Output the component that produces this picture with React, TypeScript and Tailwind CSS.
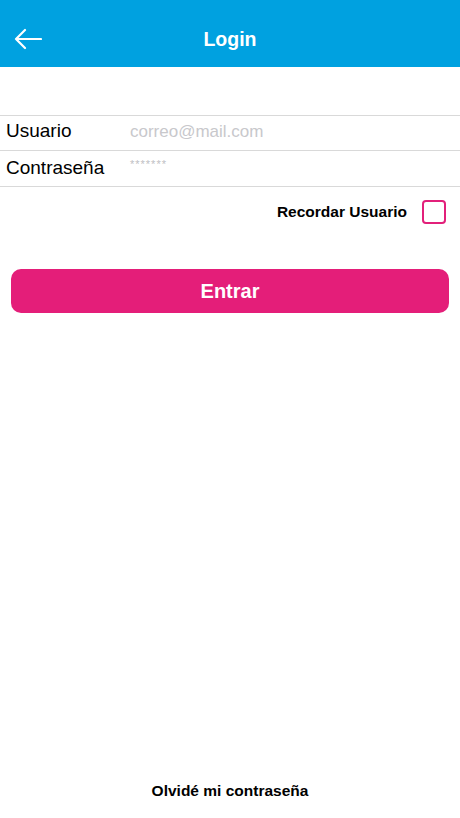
import React from "react";

export default function App() {
  return (
    <div
      className="w-[460px] h-[818px] bg-white flex flex-col"
      style={{ fontFamily: '"Liberation Sans", Arial, sans-serif' }}
    >
      <div className="h-[67px] bg-[#00a1e0] flex items-center relative shrink-0">
        <svg className="absolute left-[14px] top-[28px]" width="28" height="22" viewBox="0 0 28 22" fill="none">
          <path d="M27 11H2M11 2L2 11L11 20" stroke="white" strokeWidth="2.2" strokeLinecap="round" strokeLinejoin="round" />
        </svg>
        <div className="flex-1 text-center text-white font-bold text-[19.5px] pt-[13px]">Login</div>
      </div>
      <div className="h-[48px] shrink-0" />
      <div className="border-t border-[#d9d9d9] h-[35px] flex items-center">
        <span className="w-[130px] pl-[6px] text-[19px] text-black -mt-[3px]">Usuario</span>
        <span className="text-[17px] text-[#c8c8cc] -mt-[3px]">correo@mail.com</span>
      </div>
      <div className="border-t border-[#d9d9d9] h-[36px] flex items-center">
        <span className="w-[130px] pl-[6px] text-[19px] text-black">Contraseña</span>
        <span className="text-[11px] text-[#c0c0c4] -mt-[8px] tracking-[1px]">*******</span>
      </div>
      <div className="border-t border-[#d9d9d9] h-[50px] flex items-center justify-end pr-[14px]">
        <span className="text-[15.5px] font-bold text-black mr-[15px]">Recordar Usuario</span>
        <div className="w-[24px] h-[24px] border-2 border-[#e2207a] rounded-[4px]" />
      </div>
      <div className="px-[11px] pt-[33px]">
        <button className="w-full h-[44px] rounded-[10px] bg-[#e41e79] text-white font-bold text-[20px]">
          Entrar
        </button>
      </div>
      <div className="flex-1" />
      <div className="h-[56px] text-center text-[15.5px] font-bold text-black pt-[17px]">Olvidé mi contraseña</div>
    </div>
  );
}
